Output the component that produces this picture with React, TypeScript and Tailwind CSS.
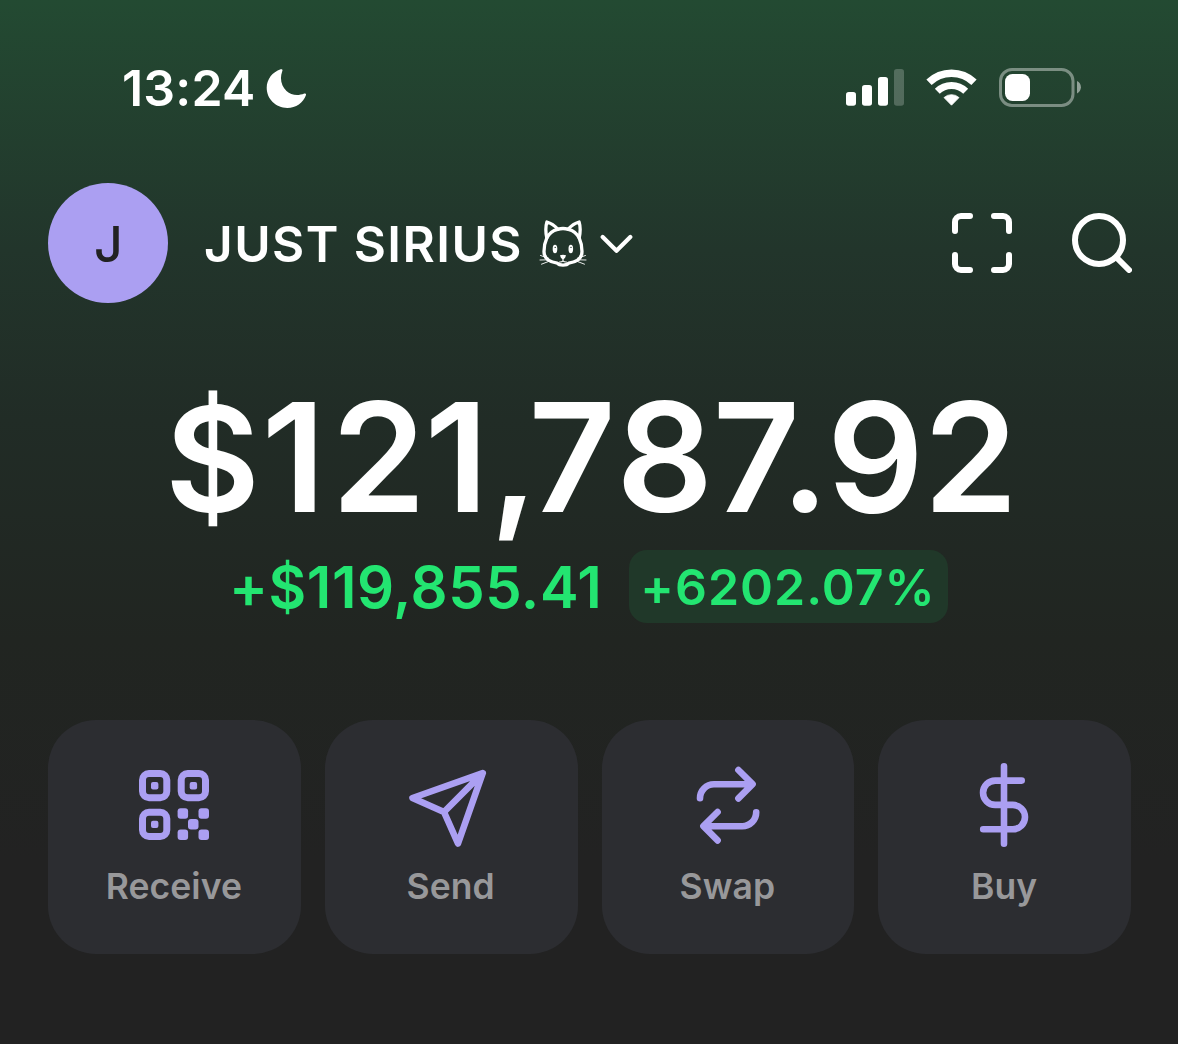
import type { ReactNode } from "react";

function Moon() {
  return (
    <svg className="ml-[11px] h-10 w-10 shrink-0" viewBox="266 68 40 40" fill="white">
      <path d="M280.6 69.3 C282 68.8 282.9 69.6 282.3 71 C279.3 79 281.6 86.3 286.5 91 C291 95.2 297.6 96.3 304.3 93.6 C305.6 93.1 306.4 93.8 306 95 C303.4 102.8 295.8 108 287.3 108 C275.8 108 266.7 99 266.7 87.8 C266.7 79.2 272.4 72.2 280.6 69.3Z" />
    </svg>
  );
}

function Signal() {
  return (
    <svg className="h-10 w-[58px]" viewBox="846 68 58 40" fill="white">
      <rect x="846" y="92" width="10" height="13.8" rx="2.8" />
      <rect x="862" y="85" width="10" height="20.8" rx="2.8" />
      <rect x="878" y="77" width="10" height="28.8" rx="2.8" />
      <rect x="894" y="69" width="10" height="36.8" rx="2.8" opacity="0.22" />
    </svg>
  );
}

function Wifi() {
  return (
    <svg className="ml-[22px] h-10 w-[52px]" viewBox="926 68 52 40" fill="none" stroke="white">
      <path d="M929 82.2 A32.6 32.6 0 0 1 974 82.2" strokeWidth="7.6" />
      <path d="M937.3 91.2 A20.3 20.3 0 0 1 965.7 91.2" strokeWidth="7" />
      <path d="M951.5 105.2 L944 97.6 A11 11 0 0 1 959 97.6Z" fill="white" strokeWidth="0.8" strokeLinejoin="round" />
    </svg>
  );
}

function Battery() {
  return (
    <svg className="ml-[20px] h-10 w-[84px]" viewBox="998 68 84 40" fill="none">
      <rect x="1000.5" y="69.5" width="72.5" height="36" rx="11.5" stroke="white" strokeOpacity="0.4" strokeWidth="3" />
      <rect x="1005" y="74" width="25" height="27" rx="7.5" fill="white" />
      <path d="M1077 81 C1082.2 83.4 1082.2 91 1077 93.4Z" fill="white" fillOpacity="0.5" />
    </svg>
  );
}

function Cat() {
  return (
    <svg className="h-[50px] w-[50px] shrink-0" viewBox="538 218 50 50" fill="none" stroke="white" strokeLinecap="round" strokeLinejoin="round">
      <path d="M546.8 238 C545.5 232 545.5 226.5 546.9 222 C551.6 223.2 555 226 557.7 229.3 C561 228.3 565 228.3 568.3 229.3 C571 226 574.4 223.2 579.1 222 C580.5 226.5 580.5 232 579.2 238 C580.8 241.5 582 246.5 582 251.5 C582 258.5 576.5 262 568.8 263.2 C566.5 265.8 559.5 265.8 557.2 263.2 C549.5 262 544 258.5 544 251.5 C544 246.5 545.2 241.5 546.8 238Z" strokeWidth="3.3" />
      <path d="M546.8 238 C549 233.5 552.7 230.5 557.7 229.3 M579.2 238 C577 233.5 573.3 230.5 568.3 229.3" strokeWidth="3.3" />
      <ellipse cx="555" cy="249" rx="2.3" ry="4.2" fill="white" stroke="none" />
      <ellipse cx="570.8" cy="249" rx="2.3" ry="4.2" fill="white" stroke="none" />
      <circle cx="555.2" cy="247.4" r="0.7" fill="#22352a" stroke="none" />
      <circle cx="571" cy="247.4" r="0.7" fill="#22352a" stroke="none" />
      <path d="M560 255.3 Q563 254 566 255.3 Q565.8 258 563 259.4 Q560.2 258 560 255.3Z" fill="white" stroke="none" />
      <path d="M563 258 V260.8 M559.5 262 Q561.7 262.3 563 260.8 Q564.3 262.3 566.5 262" strokeWidth="1.1" />
      <path d="M548.5 258.2 L540.5 255.5 M548.5 259.8 L540 260 M549 261.3 L541.5 264.2 M577.5 258.2 L585.5 255.5 M577.5 259.8 L586 260 M577 261.3 L584.5 264.2" strokeWidth="0.9" />
    </svg>
  );
}

function Chevron() {
  return (
    <svg className="ml-3 h-5 w-[34px] shrink-0" viewBox="600 233 34 20" fill="none" stroke="white" strokeWidth="4.2" strokeLinecap="round" strokeLinejoin="round">
      <path d="M602.7 237 L616.5 250.8 L630.3 237" />
    </svg>
  );
}

function ScanIcon() {
  return (
    <svg className="h-[60px] w-[60px]" viewBox="952 213 60 60" fill="none" stroke="white" strokeWidth="6" strokeLinecap="round">
      <path d="M970 216 H961 A6 6 0 0 0 955 222 V231 M994 216 H1003 A6 6 0 0 1 1009 222 V231 M1009 255 V264 A6 6 0 0 1 1003 270 H994 M970 270 H961 A6 6 0 0 1 955 264 V255" />
    </svg>
  );
}

function SearchIcon() {
  return (
    <svg className="ml-[60px] h-[60px] w-[60px]" viewBox="1072 213 60 60" fill="none" stroke="white" strokeWidth="6" strokeLinecap="round">
      <circle cx="1099" cy="240" r="24" />
      <path d="M1116.5 257.5 L1129 270" />
    </svg>
  );
}

function QrIcon() {
  return (
    <svg className="h-[90px] w-[90px]" viewBox="129 760 90 90" fill="#ab9ff2">
      <g fill="none" stroke="#ab9ff2" strokeWidth="7">
        <rect x="142.5" y="773.5" width="24.3" height="24.3" rx="6.5" />
        <rect x="181.2" y="773.5" width="24.3" height="24.3" rx="6.5" />
        <rect x="142.5" y="812.2" width="24.3" height="24.3" rx="6.5" />
      </g>
      <rect x="151" y="782" width="7.4" height="7.4" rx="2" />
      <rect x="189.7" y="782" width="7.4" height="7.4" rx="2" />
      <rect x="151" y="820.7" width="7.4" height="7.4" rx="2" />
      <rect x="177.6" y="808.3" width="10.5" height="10.5" rx="3" />
      <rect x="198.5" y="808.3" width="10.5" height="10.5" rx="3" />
      <rect x="188" y="819" width="10.5" height="10.5" rx="3" />
      <rect x="177.6" y="829.5" width="10.5" height="10.5" rx="3" />
      <rect x="198.5" y="829.5" width="10.5" height="10.5" rx="3" />
    </svg>
  );
}

function LineIcon({ box, children }: { box: string; children: ReactNode }) {
  return (
    <svg className="h-[90px] w-[90px]" viewBox={box} fill="none" stroke="#ab9ff2" strokeWidth="6.6" strokeLinecap="round" strokeLinejoin="round">
      {children}
    </svg>
  );
}

function Action({ label, icon }: { label: string; icon: ReactNode }) {
  return (
    <button className="flex h-[234px] flex-1 flex-col items-center rounded-[48px] bg-[#2c2d31] pt-10">
      {icon}
      <span className="mr-px mt-[15px] text-[35.5px] font-semibold leading-[44px] tracking-[0.05px] text-[#98989a]">{label}</span>
    </button>
  );
}

export default function App() {
  return (
    <div className="flex h-[1044px] w-[1178px] flex-col overflow-hidden bg-[linear-gradient(180deg,#234a32_0px,#22352b_250px,#212c26_420px,#212521_640px,#222222_860px,#222222_1044px)] font-['Inter',sans-serif] text-white">
      <header className="flex h-[175px] items-center pl-[122px] pr-[96px]">
        <span className="w-[133px] whitespace-nowrap text-[50px] font-semibold leading-[60px] tracking-[0.2px]">13:24</span>
        <Moon />
        <div className="ml-auto flex items-center">
          <Signal />
          <Wifi />
          <Battery />
        </div>
      </header>

      <div className="mt-2 flex h-[120px] items-center pl-12 pr-[46px]">
        <div className="flex h-[120px] w-[120px] items-center justify-center rounded-full bg-[#ab9ff2] pl-px pt-0.5 text-[50px] font-medium text-[#222222]">J</div>
        <span className="ml-9 w-[334px] whitespace-nowrap pt-0.5 text-[49.5px] font-semibold leading-[60px] tracking-[1.45px]">JUST SIRIUS</span>
        <Cat />
        <Chevron />
        <div className="ml-auto flex items-center">
          <ScanIcon />
          <SearchIcon />
        </div>
      </div>

      <div className="mt-[62px] h-[184px] whitespace-nowrap pl-[165px] text-[151.5px] font-semibold leading-[184px]">
        <span className="text-[146px] tracking-[1.5px]">$</span>
        <span className="tracking-[6px]">1</span>
        <span className="tracking-[-1.4px]">2</span>
        <span className="tracking-[1.5px]">1</span>
        <span className="tracking-[-10px]">,</span>
        <span className="tracking-[0.5px]">7</span>
        <span className="tracking-[-0.4px]">87.92</span>
      </div>

      <div className="mt-px flex h-[73px] items-center pl-[229px]">
        <span className="w-[400px] whitespace-nowrap pt-0.5 text-[58px] font-semibold leading-[73px] tracking-[0.55px] text-[#23e571]">+$119,855.41</span>
        <span className="flex h-[73px] w-[319px] items-center justify-center whitespace-nowrap rounded-[18px] bg-[#203829] pr-px pt-0.5 text-[50px] font-semibold tracking-[1px] text-[#23e571]">+6202.07%</span>
      </div>

      <div className="mt-[97px] flex gap-6 pl-12 pr-[47px]">
        <Action label="Receive" icon={<QrIcon />} />
        <Action
          label="Send"
          icon={
            <LineIcon box="406 760 90 90">
              <path d="M482.7 773.2 L412.5 798 L444 812 L458 843.5Z M444 812 L482.7 773.2" />
            </LineIcon>
          }
        />
        <Action
          label="Swap"
          icon={
            <LineIcon box="683 760 90 90">
              <path d="M738.4 770 L752.6 784.2 L738.4 798.4 M752 784.2 H714 A14 14 0 0 0 700 798.2 M717.6 812 L703.4 826.2 L717.6 840.4 M704 826.2 H742.2 A14 14 0 0 0 756.2 812.2" />
            </LineIcon>
          }
        />
        <Action
          label="Buy"
          icon={
            <LineIcon box="960 760 90 90">
              <path d="M1004 766.3 V843.7 M1021.7 780.6 H995.2 A12.1 12.1 0 0 0 995.2 804.9 H1012.8 A12.2 12.2 0 0 1 1012.8 829.3 H983.2" />
            </LineIcon>
          }
        />
      </div>
    </div>
  );
}
